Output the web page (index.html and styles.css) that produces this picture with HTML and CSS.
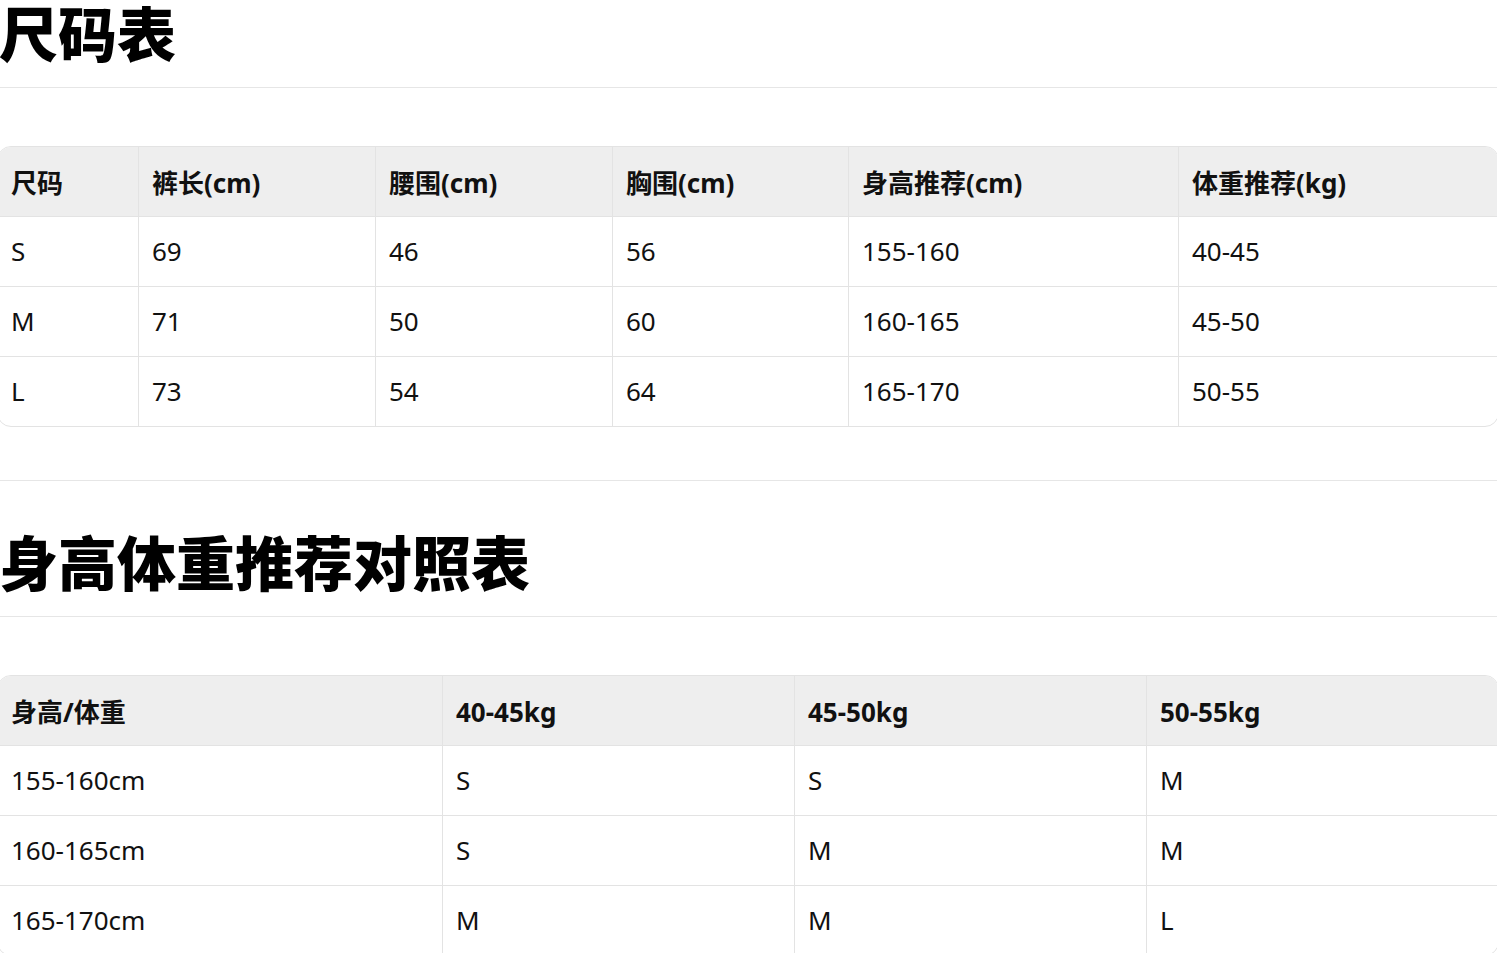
FILE: index.html
```html
<!DOCTYPE html>
<html lang="zh-CN">
<head>
<meta charset="utf-8">
<title>尺码表</title>
<link rel="stylesheet" href="styles.css">
</head>
<body>
<main class="page">
  <section class="block">
    <h1 class="title">尺码表</h1>
    <table class="grid">
      <colgroup>
        <col class="c1-1"><col class="c1-2"><col class="c1-3"><col class="c1-4"><col class="c1-5"><col class="c1-6">
      </colgroup>
      <thead>
        <tr><th>尺码</th><th>裤长(cm)</th><th>腰围(cm)</th><th>胸围(cm)</th><th>身高推荐(cm)</th><th>体重推荐(kg)</th></tr>
      </thead>
      <tbody>
        <tr><td>S</td><td>69</td><td>46</td><td>56</td><td>155-160</td><td>40-45</td></tr>
        <tr><td>M</td><td>71</td><td>50</td><td>60</td><td>160-165</td><td>45-50</td></tr>
        <tr><td>L</td><td>73</td><td>54</td><td>64</td><td>165-170</td><td>50-55</td></tr>
      </tbody>
    </table>
  </section>
  <hr class="rule">
  <section class="block">
    <h1 class="title">身高体重推荐对照表</h1>
    <table class="grid">
      <colgroup>
        <col class="c2-1"><col class="c2-2"><col class="c2-3"><col class="c2-4">
      </colgroup>
      <thead>
        <tr><th>身高/体重</th><th>40-45kg</th><th>45-50kg</th><th>50-55kg</th></tr>
      </thead>
      <tbody>
        <tr><td>155-160cm</td><td>S</td><td>S</td><td>M</td></tr>
        <tr><td>160-165cm</td><td>S</td><td>M</td><td>M</td></tr>
        <tr><td>165-170cm</td><td>M</td><td>M</td><td>L</td></tr>
      </tbody>
    </table>
  </section>
</main>
</body>
</html>
```

FILE: styles.css
```css
html, body {
  margin: 0;
  padding: 0;
  background: #ffffff;
}

body {
  font-family: "Noto Sans", "Noto Sans CJK SC", sans-serif;
  color: #111111;
  font-size: 26px;
  overflow: hidden;
}

.page {
  margin-left: -3px;
  width: 1500px;
}

.title {
  margin: 0;
  font-family: "Noto Sans CJK SC", sans-serif;
  font-size: 59px;
  font-weight: 900;
  line-height: 60px;
  padding: 2px 0 25px 2px;
  border-bottom: 1px solid #e6e6e6;
  color: #000;
}

.grid {
  margin-top: 58px;
  width: 1500px;
  table-layout: fixed;
  border-collapse: separate;
  border-spacing: 0;
  border: 1px solid #e3e3e3;
  border-radius: 14px;
}

.grid th,
.grid td {
  text-align: left;
  padding: 15px 13px;
  line-height: 39px;
  border-left: 1px solid #e3e3e3;
  border-top: 1px solid #e3e3e3;
  white-space: nowrap;
}

.grid th:first-child,
.grid td:first-child {
  border-left: none;
}

.grid thead th {
  border-top: none;
  background: #eeeeee;
  font-weight: 700;
  padding-top: 17px;
  padding-bottom: 13px;
}

.grid td {
  font-weight: 400;
}

.grid thead th:first-child { border-top-left-radius: 13px; }
.grid thead th:last-child { border-top-right-radius: 13px; }

.rule {
  margin: 53px 0 48px 3px;
  border: none;
  border-top: 1px solid #e6e6e6;
  height: 0;
}

.c1-1 { width: 140px; }
.c1-2 { width: 237px; }
.c1-3 { width: 237px; }
.c1-4 { width: 236px; }
.c1-5 { width: 330px; }
.c1-6 { width: 320px; }

.c2-1 { width: 444px; }
.c2-2 { width: 352px; }
.c2-3 { width: 352px; }
.c2-4 { width: 352px; }
```
